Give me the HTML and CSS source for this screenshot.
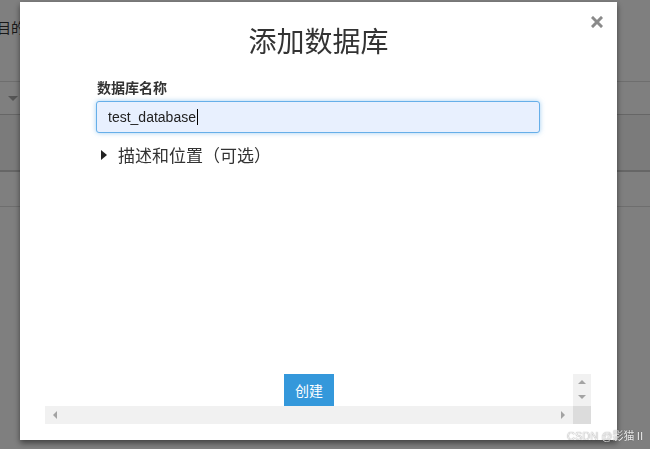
FILE: index.html
```html
<!DOCTYPE html>
<html lang="zh">
<head>
<meta charset="utf-8">
<title>添加数据库</title>
<link rel="stylesheet" href="styles.css">
</head>
<body>
<div class="page">
  <div class="page-row page-row-text"><span class="page-text">项目的说明</span></div>
  <div class="page-row page-row-select"><span class="select-caret"></span></div>
  <div class="page-row page-row-head"></div>
  <div class="page-row page-row-cell"></div>
</div>
<div class="overlay"></div>
<div class="modal">
  <button class="close" aria-label="关闭">
    <svg width="12" height="12" viewBox="0 0 12 12"><path d="M2 2 L10 10 M10 2 L2 10" stroke="#8a8a8a" stroke-width="3" stroke-linecap="square"/></svg>
  </button>
  <h1 class="title">添加数据库</h1>
  <div class="body">
    <div class="label">数据库名称</div>
    <div class="input"><span class="input-text">test_database</span><span class="caret"></span></div>
    <div class="details"><span class="tri"></span><span class="details-text">描述和位置（可选）</span></div>
  </div>
  <div class="scroller">
    <div class="viewport"><button class="btn">创建</button></div>
    <div class="vbar"><span class="arr up"></span><span class="arr down"></span></div>
    <div class="hbar"><span class="arr left"></span><span class="arr right"></span></div>
    <div class="corner"></div>
  </div>
</div>
<div class="watermark">CSDN @影猫Ⅱ</div>
</body>
</html>
```

FILE: styles.css
```css
html, body {
  margin: 0;
  padding: 0;
  width: 650px;
  height: 449px;
  overflow: hidden;
  background: #fff;
  font-family: "Noto Sans CJK SC", "Liberation Sans", sans-serif;
}
.page {
  display: flex;
  flex-direction: column;
}
.page-row { box-sizing: border-box; }
.page-row-text {
  height: 82px;
  padding-top: 17px;
  font-size: 14px;
  line-height: 20px;
  color: #333;
  border-bottom: 1px solid #ddd;
  white-space: nowrap;
}
.page-text { margin-left: -17px; }
.page-row-select {
  height: 33px;
  border-bottom: 1px solid #ccc;
  padding: 14px 0 0 8px;
}
.select-caret {
  display: block;
  width: 0;
  height: 0;
  border-left: 5px solid transparent;
  border-right: 5px solid transparent;
  border-top: 5px solid #aaa;
}
.page-row-head {
  height: 57px;
  background: #f6f6f6;
  border-bottom: 2px solid #ccc;
}
.page-row-cell {
  height: 35px;
  border-bottom: 1px solid #ddd;
}
.overlay {
  position: fixed;
  inset: 0;
  background: rgba(0, 0, 0, 0.5);
}
.modal {
  position: fixed;
  left: 20px;
  top: 2px;
  width: 597px;
  height: 438px;
  background: #fff;
  box-shadow: 0 3px 6px rgba(0, 0, 0, 0.5);
  display: flex;
  flex-direction: column;
}
.close {
  position: absolute;
  right: 14px;
  top: 14px;
  padding: 0;
  border: 0;
  background: none;
  line-height: 0;
}
.title {
  margin: 0;
  padding-top: 18px;
  font-size: 28px;
  line-height: 40px;
  font-weight: 400;
  color: #333;
  text-align: center;
}
.body {
  padding: 0 77px 0 76px;
  flex: 1;
}
.label {
  margin-top: 17px;
  font-size: 14px;
  line-height: 20px;
  font-weight: 700;
  color: #333;
  padding-left: 1px;
}
.input {
  margin-top: 4px;
  height: 32px;
  box-sizing: border-box;
  border: 1px solid #66afe9;
  border-radius: 3px;
  background: #e8f0fe;
  box-shadow: 0 0 5px rgba(102, 175, 233, 0.6);
  display: flex;
  align-items: center;
  padding-left: 11px;
  font-family: "Liberation Sans", sans-serif;
  font-size: 14px;
  color: #222;
}
.caret {
  width: 1px;
  height: 16px;
  background: #000;
  margin-left: 1px;
}
.details {
  margin-top: 10px;
  display: flex;
  align-items: center;
  height: 24px;
  color: #333;
}
.tri {
  width: 0;
  height: 0;
  border-top: 5px solid transparent;
  border-bottom: 5px solid transparent;
  border-left: 6px solid #222;
  margin-left: 5px;
  margin-right: 11px;
}
.details-text {
  font-size: 17px;
  line-height: 24px;
}
.scroller {
  margin: 0 26px 16px 25px;
  display: grid;
  grid-template-columns: 528px 18px;
  grid-template-rows: 32px 18px;
}
.viewport {
  display: flex;
  justify-content: center;
  overflow: hidden;
}
.btn {
  width: 50px;
  height: 32px;
  border: 0;
  padding: 0;
  background: #3498db;
  color: #fff;
  font-family: "Noto Sans CJK SC", sans-serif;
  font-size: 14px;
  line-height: 32px;
}
.vbar {
  background: #f1f1f1;
  position: relative;
}
.hbar {
  background: #f1f1f1;
  position: relative;
}
.corner { background: #dcdcdc; }
.arr {
  position: absolute;
  width: 0;
  height: 0;
}
.up {
  left: 5px;
  top: 6px;
  border-left: 4px solid transparent;
  border-right: 4px solid transparent;
  border-bottom: 4px solid #a3a3a3;
}
.down {
  left: 5px;
  top: 21px;
  border-left: 4px solid transparent;
  border-right: 4px solid transparent;
  border-top: 4px solid #a3a3a3;
}
.left {
  left: 8px;
  top: 5px;
  border-top: 4px solid transparent;
  border-bottom: 4px solid transparent;
  border-right: 4px solid #a3a3a3;
}
.right {
  right: 8px;
  top: 5px;
  border-top: 4px solid transparent;
  border-bottom: 4px solid transparent;
  border-left: 4px solid #a3a3a3;
}
.watermark {
  position: fixed;
  left: 567px;
  top: 428px;
  white-space: nowrap;
  font-size: 11px;
  line-height: 16px;
  color: rgba(255, 255, 255, 0.9);
  text-shadow: 0 0 1px rgba(0, 0, 0, 0.6);
  font-family: "Liberation Sans", "Noto Sans CJK SC", sans-serif;
}
```
